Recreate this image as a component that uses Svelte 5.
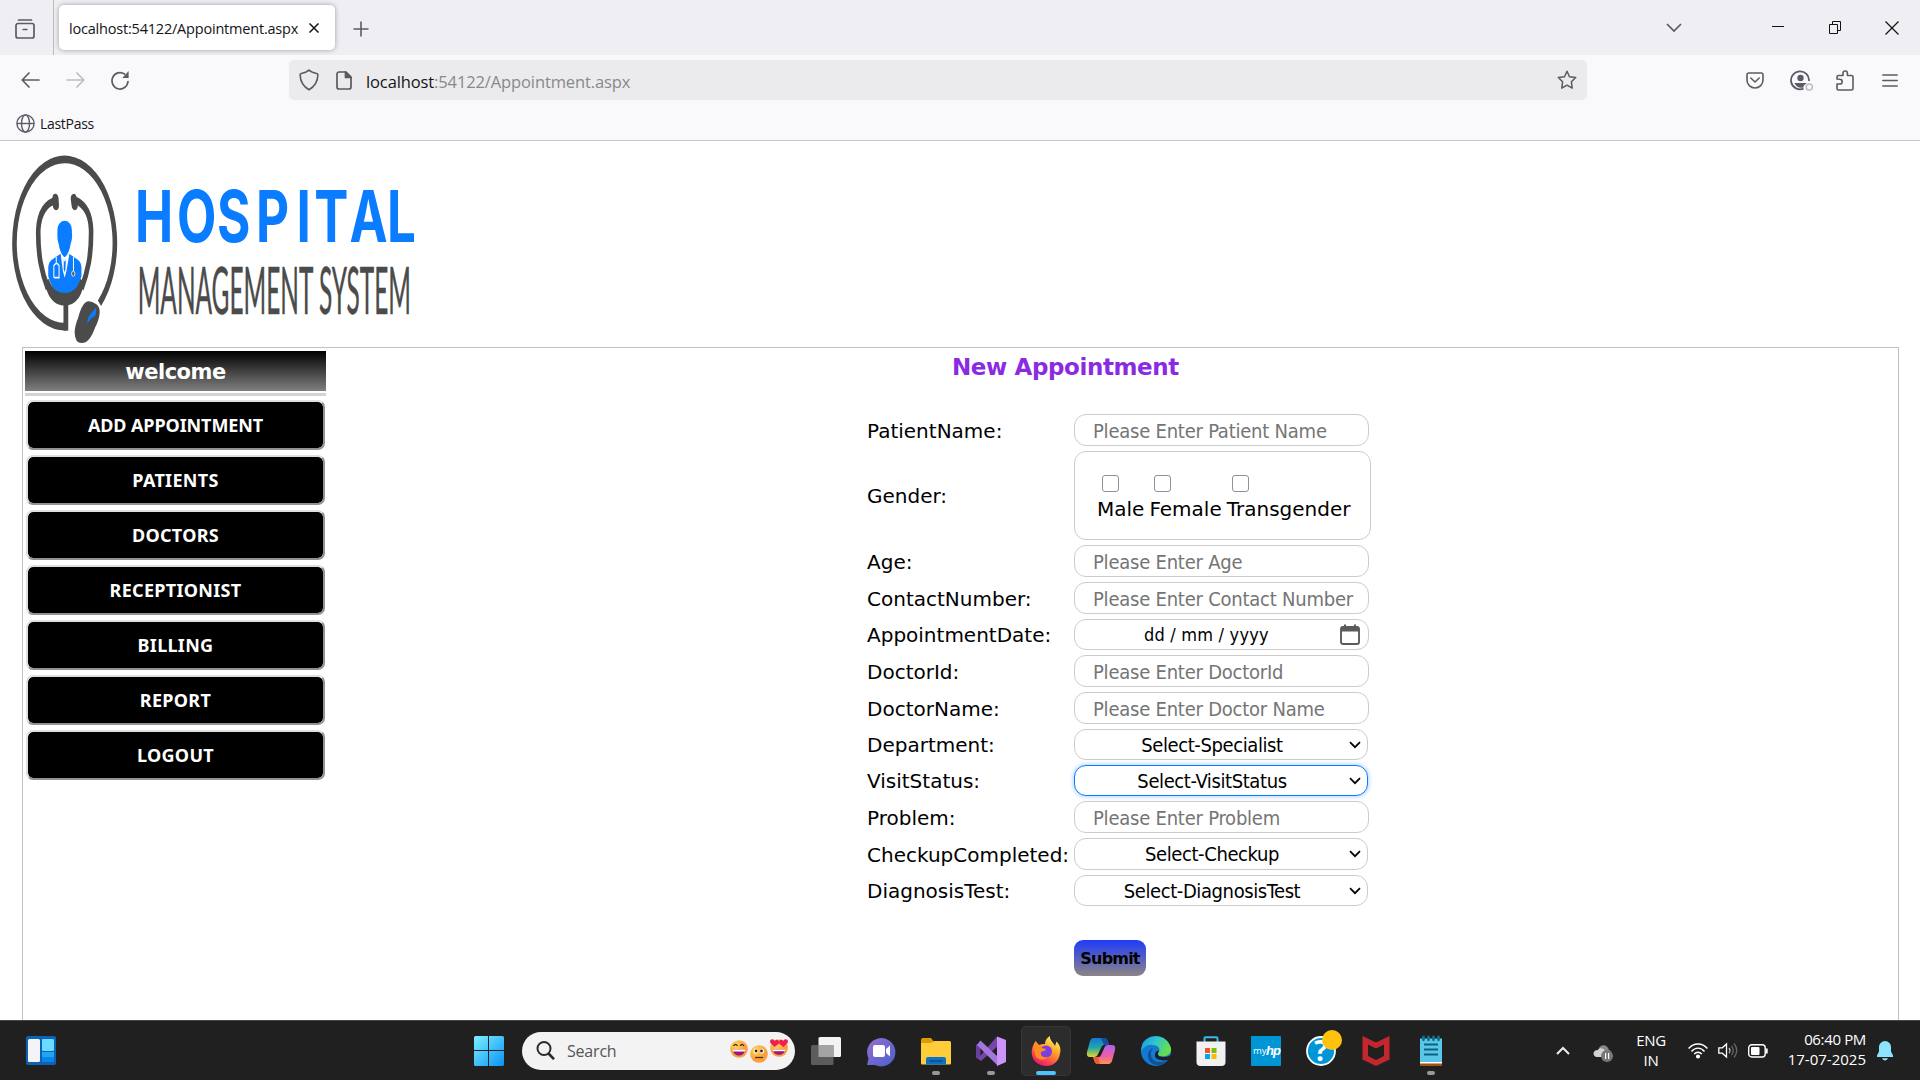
<script>
  const menu = ['ADD APPOINTMENT', 'PATIENTS', 'DOCTORS', 'RECEPTIONIST', 'BILLING', 'REPORT', 'LOGOUT'];
  const genders = ['Male', 'Female', 'Transgender'];
  const fields = [
    { label: 'PatientName:', kind: 'text', value: 'Please Enter Patient Name' },
    { label: 'Gender:', kind: 'gender' },
    { label: 'Age:', kind: 'text', value: 'Please Enter Age' },
    { label: 'ContactNumber:', kind: 'text', value: 'Please Enter Contact Number' },
    { label: 'AppointmentDate:', kind: 'date' },
    { label: 'DoctorId:', kind: 'text', value: 'Please Enter DoctorId' },
    { label: 'DoctorName:', kind: 'text', value: 'Please Enter Doctor Name' },
    { label: 'Department:', kind: 'select', value: 'Select-Specialist' },
    { label: 'VisitStatus:', kind: 'select', value: 'Select-VisitStatus', focused: true },
    { label: 'Problem:', kind: 'text', value: 'Please Enter Problem' },
    { label: 'CheckupCompleted:', kind: 'select', value: 'Select-Checkup', tall: true },
    { label: 'DiagnosisTest:', kind: 'select', value: 'Select-DiagnosisTest' }
  ];
</script>

<div class="screen">
  <header class="tabs">
    <div class="view">
      <svg width="20" height="20" viewBox="0 0 20 20" fill="none" stroke="#5b5b66" stroke-width="1.7" stroke-linecap="round"><path d="M3.500 1h13M3 4.500h14a2 2 0 0 1 2 2V17a2 2 0 0 1-2 2H3a2 2 0 0 1-2-2V6.500a2 2 0 0 1 2-2zM8.200 10.500h3.600" /></svg>
    </div>
    <div class="tab">
      <span>localhost:54122/Appointment.aspx</span>
      <svg width="10" height="10" viewBox="0 0 10 10" stroke="#15141a" stroke-width="1.500"><path d="M.5.5l9 9M9.500.5l-9 9" /></svg>
    </div>
    <svg class="plus" width="16" height="16" viewBox="0 0 16 16" stroke="#5b5b66" stroke-width="1.600"><path d="M8 .5v15M.5 8h15" /></svg>
    <div class="window">
      <svg class="down" width="16" height="10" viewBox="0 0 16 10" fill="none" stroke="#5b5b66" stroke-width="1.700"><path d="M1 1l7 7 7-7" /></svg>
      <svg class="mini" width="12" height="13" viewBox="0 0 12 13" stroke="#111"><path d="M0 5.500h12" /></svg>
      <svg class="restore" width="13" height="14" viewBox="0 0 13 14" fill="none" stroke="#111"><path d="M.5 3.500h8v9h-8zM3.500 3.500v-3h8v9h-3" /></svg>
      <svg class="shut" width="14" height="14" viewBox="0 0 14 14" stroke="#111" stroke-width="1.200"><path d="M.5.5l13 13M13.500.5l-13 13" /></svg>
    </div>
  </header>

  <div class="toolbar">
    <svg class="back" width="19" height="16" viewBox="0 0 19 16" fill="none" stroke="#5b5b66" stroke-width="1.700" stroke-linecap="round" stroke-linejoin="round"><path d="M18 8H1.500M8 1L1.200 8 8 15" /></svg>
    <svg class="forward" width="19" height="16" viewBox="0 0 19 16" fill="none" stroke="#bdbdc2" stroke-width="1.700" stroke-linecap="round" stroke-linejoin="round"><path d="M1 8h16.500M11 1l6.800 7-6.800 7" /></svg>
    <svg class="reload" width="20" height="20" viewBox="0 0 20 20"><path d="M18 11.500A8 8.200 0 1 1 14.500 4" fill="none" stroke="#5b5b66" stroke-width="1.700" stroke-linecap="round" /><path d="M18.600 1v7h-6.300z" fill="#5b5b66" /></svg>
    <div class="url">
      <svg width="20" height="22" viewBox="0 0 20 22" fill="none" stroke="#5b5b5f" stroke-width="1.600" stroke-linejoin="round"><path d="M10 1.200c2 1.800 4.700 2.800 7.700 3.300.8.200 1.200.6 1.200 1.300-.2 7-2.700 11.500-8.900 15-6.200-3.500-8.700-8-8.900-15 0-.7.400-1.100 1.200-1.300 3-.5 5.700-1.500 7.700-3.300z" /></svg>
      <svg class="doc" width="16" height="19" viewBox="0 0 16 19" fill="none" stroke="#5b5b5f" stroke-width="1.700" stroke-linejoin="round"><path d="M3 1h7l5 5v10a2 2 0 0 1-2 2H3a2 2 0 0 1-2-2V3a2 2 0 0 1 2-2z" /><path d="M9.500 1v5.500H15z" fill="#5b5b5f" /></svg>
      <span><b>localhost</b>:54122/Appointment.aspx</span>
      <svg class="star" width="20" height="20" viewBox="0 0 20 20" fill="none" stroke="#5b5b5f" stroke-width="1.500" stroke-linejoin="round"><path d="M10 1.200l2.500 5.500 6.200.8-4.300 4.300.8 6.400-5.200-3-5.200 3 .8-6.400L1.300 7.500l6.200-.8z" /></svg>
    </div>
    <div class="tools">
      <svg width="18" height="17" viewBox="0 0 18 17" fill="none" stroke="#5b5b66" stroke-width="1.600" stroke-linecap="round" stroke-linejoin="round"><path d="M2.500 1h13A1.600 1.600 0 0 1 17 2.600V8c0 4.500-3.500 8-8 8S1 12.500 1 8V2.600A1.600 1.600 0 0 1 2.500 1zM4.800 6L9 10l4.200-4" /></svg>
      <svg class="acct" width="24" height="21" viewBox="0 0 24 21"><path d="M19 11a9 9 0 1 0-5.500 7.600" fill="none" stroke="#5b5b66" stroke-width="1.800" /><circle cx="10.500" cy="8" r="3.200" fill="#5b5b66" /><path d="M4.500 13h12l-3 3v1.500c-4 1.200-7.500-.8-9-4.500z" fill="#5b5b66" /><circle cx="19.300" cy="17" r="3.100" fill="#f9f9fb" stroke="#bdbdc2" stroke-width="1.500" /></svg>
      <svg class="puzzle" width="18" height="21" viewBox="0 0 18 21" fill="none" stroke="#5b5b66" stroke-width="1.600" stroke-linejoin="round"><path d="M1 9V7a1.500 1.500 0 0 1 1.500-1.500H7V3.200a2.200 2.200 0 0 1 4.400 0v2.300h4A1.500 1.500 0 0 1 17 7v11.500a1.500 1.500 0 0 1-1.500 1.500h-13A1.500 1.500 0 0 1 1 18.500V14h2.800a2.300 2.300 0 0 0 0-4.700z" /></svg>
      <svg class="burger" width="16" height="13" viewBox="0 0 16 13" stroke="#5b5b66" stroke-width="1.500" stroke-linecap="round"><path d="M.8 1h14.400M.8 6.500h14.400M.8 12h14.400" /></svg>
    </div>
  </div>

  <div class="bookmarks">
    <svg width="19" height="19" viewBox="0 0 19 19" fill="none" stroke="#5b5b66" stroke-width="1.400"><circle cx="9.500" cy="9.500" r="8.600" /><ellipse cx="9.500" cy="9.500" rx="4" ry="8.600" /><path d="M1 9.500h17" /></svg>
    <span>LastPass</span>
  </div>

  <main>
    <svg class="logo" width="430" height="206" viewBox="0 3 1290 618" role="img" aria-label="Hospital Management System">
      <g transform="translate(194 305) scale(.6 1)" fill="none" stroke="#4b4b4b">
        <path d="M6 255A251 251 0 1 1 174 185" stroke-width="23" />
        <path d="M6 180V267" stroke-width="24" />
        <g stroke="none" fill="#0a7cff">
          <path d="M-20 36L-64 54Q-82 62-82 80V104C-60 150-30 160 0 160S60 150 84 104V80Q84 62 66 54L22 36L0 60z" />
          <path d="M-20 36L-9 88L0 108L9 88L24 36L6 46L4 82L0 92L-5 82L-4 46z" fill="#fff" />
          <path d="M-36-28C-42-74 42-74 36-28C40-14 34 0 30 6C26 24 12 44 0 46C-12 44-26 24-30 6C-34 0-38-14-36-28z" />
        </g>
        <path d="M-42 46V66M-54 108V72Q-40 58-28 72V108H-52M44 46V88" stroke="#fff" stroke-width="5" />
        <circle cx="43" cy="96" r="8" fill="#555" stroke="#fff" stroke-width="3" />
        <path d="M-45-122C-92-118-128-86-132-35C-134 40-116 90-84 140M84 140C116 90 134 40 132-35C130-80 104-110 56-124" stroke-width="23" />
        <path d="M-98 118C-90 170-45 192 0 192S90 170 95 118L78 112C60 146 30 154 0 154S-60 146-80 112z" fill="#4b4b4b" stroke="none" />
        <path d="M-46-128l2 18M46-128l4 18" stroke-width="31" stroke-linecap="round" />
      </g>
      <path d="M258 486q12-6 30 6q12 8 11 26q-1 20-14 45q-16 46-40 46q-20 0-21-30q0-20 10-44q10-40 24-49z" fill="#4b4b4b" />
      <path d="M289 502l-2 24-14 10-12 16 4-20 10-14z" fill="#0a7cff" />
      <g transform="scale(.72 1)">
        <text class="hospital" y="305" x="563 738 904 1067 1235 1309 1456 1612">HOSPITAL</text>
      </g>
      <text class="system" x="413" y="523" textLength="820" lengthAdjust="spacingAndGlyphs">MANAGEMENT SYSTEM</text>
    </svg>

    <section class="panel">
      <nav>
        <h2>welcome</h2>
        <i></i>
        <div class="buttons">
          {#each menu as item}<button>{item}</button>{/each}
        </div>
      </nav>

      <div class="form">
        <h1>New Appointment</h1>
        {#each fields as f}
          <div class="row {f.kind}" class:tall={f.tall}>
            <span class="label">{f.label}</span>
            {#if f.kind === 'text'}
              <input placeholder={f.value} />
            {:else if f.kind === 'select'}
              <div class="box drop" class:focused={f.focused}>
                <span>{f.value}</span>
                <svg width="12" height="8" viewBox="0 0 12 8" fill="none" stroke="#000" stroke-width="1.700"><path d="M1 1.200l5 5 5-5" /></svg>
              </div>
            {:else if f.kind === 'date'}
              <div class="box day">
                <span>dd / mm / yyyy</span>
                <svg width="20" height="21" viewBox="0 0 20 21"><path d="M1 5a2 2 0 0 1 2-2h14a2 2 0 0 1 2 2v13a2 2 0 0 1-2 2H3a2 2 0 0 1-2-2z" fill="none" stroke="#5b5b5b" stroke-width="1.900" /><path d="M1 3h18v4.500H1zM4 .5h2v3H4zM14 .5h2v3h-2z" fill="#5b5b5b" /></svg>
              </div>
            {:else}
              <div class="box genders">
                {#each genders as g}
                  <label><i></i><span>{g}</span></label>
                {/each}
              </div>
            {/if}
          </div>
        {/each}
        <button class="submit">Submit</button>
      </div>
    </section>
  </main>

  <footer>
    <svg class="widgets" width="30" height="29" viewBox="0 0 30 29"><rect width="30" height="29" rx="2" fill="#0c63b4" /><rect x="2" y="3" width="12" height="23" rx="1.500" fill="#f4f4f8" /><rect x="16" y="3" width="12" height="12" rx="1" fill="#6bdcff" /><path d="M16 16h12v5H16z" fill="#22a5f5" /><path d="M16 21h12v5H16z" fill="#0a84e8" /></svg>

    <svg class="start" width="30" height="30" viewBox="0 0 30 30">
      <defs><linearGradient id="win" x1="0" y1="0" x2="1" y2="1"><stop offset="0" stop-color="#7df0ff" /><stop offset="1" stop-color="#0a92f5" /></linearGradient></defs>
      <path d="M0 1.500Q0 0 1.500 0H14v14H0zM15 0h13.500Q30 0 30 1.500V14H15zM0 15h14v15H1.500Q0 30 0 28.500zM15 15h15v13.500q0 1.500-1.500 1.500H15z" fill="url(#win)" />
    </svg>

    <div class="search">
      <svg width="19" height="19" viewBox="0 0 19 19" fill="none" stroke="#2b2b30" stroke-width="2"><circle cx="8" cy="7.500" r="6.500" /><path d="M12.500 12.500l5.500 5.700" stroke-width="2.600" /></svg>
      <span>Search</span>
      <svg width="60" height="26" viewBox="0 0 60 26">
        <defs><radialGradient id="face" cx=".35" cy=".3"><stop offset="0" stop-color="#ffdb55" /><stop offset="1" stop-color="#f9a03c" /></radialGradient></defs>
        <circle cx="10" cy="11" r="8.800" fill="url(#face)" /><path d="M4 11.500h12c0 8-12 8-12 0z" fill="#a3157e" /><path d="M4 11.500h12v2H4z" fill="#fff" /><path d="M4.500 8q2-3 4 0M11 8q2-3 4 0" fill="none" stroke="#5a2d18" stroke-width="1.300" />
        <circle cx="30" cy="16" r="8.800" fill="url(#face)" /><ellipse cx="26.500" cy="13" rx="2" ry="2.600" fill="#fff" /><ellipse cx="33" cy="13" rx="2" ry="2.600" fill="#fff" /><circle cx="27" cy="13" r="1.400" fill="#3b2420" /><circle cx="32.500" cy="13" r="1.400" fill="#3b2420" /><path d="M26 19.500h8" stroke="#5a2d18" stroke-width="1.300" />
        <circle cx="50" cy="10" r="8.800" fill="url(#face)" /><path d="M44 11.500h12c0 7-12 7-12 0z" fill="#a3157e" /><path d="M44 11.500h12v1.700H44z" fill="#fff" /><path d="M45.500 9l-4-4c-2-4 3-5 4.300-2 2-3 6 0 3.700 3zM54.500 9l4-4c2-4-3-5-4.300-2-2-3-6 0-3.700 3z" fill="#f01e50" />
      </svg>
    </div>

    <div class="apps">
      <div><svg viewBox="0 0 30 30"><rect x="7.500" y="1" width="22.500" height="20" rx="1.500" fill="#f3f3f3" /><rect y="9" width="22.500" height="20" rx="1.500" fill="#5c5c5c" /><path d="M7.500 9h15v12h-15z" fill="#a4a4a4" /></svg></div>
      <div><svg viewBox="0 0 30 30"><defs><linearGradient id="chat" x1="0" y1="0" x2="1" y2="1"><stop offset="0" stop-color="#9a6fd0" /><stop offset=".5" stop-color="#6f66d0" /><stop offset="1" stop-color="#4a63c8" /></linearGradient></defs><path d="M1 29l1.500-6.500A14.200 14.200 0 1 1 9 29z" fill="url(#chat)" /><rect x="7" y="9" width="12" height="12" rx="2" fill="#fff" /><path d="M20 13l4-3.500v11L20 17z" fill="#fff" /></svg></div>
      <div class="open"><svg viewBox="0 0 30 30"><path d="M0 4q0-2 2-2h8l3 4h8v5H0z" fill="#dd9b04" /><path d="M0 7h10l3-2h15.500Q30 5 30 6.500v21q0 1-1 1H1q-1 0-1-1z" fill="#ffcc3a" /><path d="M5 28.500V23q0-2 2-2h16q2 0 2 2v5.500z" fill="#0b72c4" /><path d="M8.500 25h13" stroke="#0a4d91" stroke-width="1.500" /></svg></div>
      <div class="open"><svg viewBox="0 0 30 30"><path d="M0 9l4.500-3.500v19.300L0 21.500z" fill="#6a3f9c" /><path d="M2 22.500L21 .5l1 9.500L5 25z" fill="#7446a8" /><path d="M4.500 4.500L22 21v9L1 9z" fill="#a577dc" /><path d="M21 .5L30 4v22l-9 4z" fill="#cc94f8" /></svg></div>
      <div class="open active"><svg viewBox="0 0 30 30"><defs><linearGradient id="fox" x1=".9" y1="0" x2=".35" y2="1"><stop offset=".15" stop-color="#ffe94a" /><stop offset=".55" stop-color="#ff8a2a" /><stop offset="1" stop-color="#f0146e" /></linearGradient></defs><path d="M4.500 5l3.500 4c2-1 4-1 6-1 0-4 2-6 5-8-.5 4 3 6 5 10l1.500-4.500c4 4 4.500 8 3.500 12-1 8-7 12.500-14 12.500S1 25 .7 17C.5 13 2 9 4.500 5z" fill="url(#fox)" /><circle cx="15" cy="15.500" r="6" fill="#7a3fe0" /><path d="M2 11c4-2 7-2 9 1l4 1c-1 3-4 2-5 3-1 4 2 6 7 5-6 6-14 1-13-5z" fill="#ff8b22" /></svg></div>
      <div><svg viewBox="0 0 30 30"><defs><linearGradient id="cpa" x1="0" y1="0" x2="0" y2="1"><stop offset="0" stop-color="#1676d8" /><stop offset=".5" stop-color="#1fa7a5" /><stop offset="1" stop-color="#e6d52b" /></linearGradient><linearGradient id="cpb" x1="0" y1="0" x2="0" y2="1"><stop offset="0" stop-color="#ad62ed" /><stop offset=".6" stop-color="#ee60a0" /><stop offset="1" stop-color="#ff944e" /></linearGradient></defs><path d="M7 2h11q3 0 4 4l1 3h-4q-3 0-4 3l-3 6q-1 3-4 3H4q-4 0-3-5L4 5q1-3 3-3z" fill="url(#cpa)" /><path d="M23 28H12q-3 0-4-4l-1-3h4q3 0 4-3l3-6q1-3 4-3h4q4 0 3 5l-3 11q-1 3-3 3z" fill="url(#cpb)" /><path d="M15 2h3q3 0 4 4l1 3h-5z" fill="#184ba5" /><path d="M7 21h5l2 7h-2q-3 0-4-4z" fill="#f0592c" /><path d="M17 9l-5 12h1q2-1 3-4l3-7z" fill="#202020" /></svg></div>
      <div><svg viewBox="0 0 30 30"><defs><linearGradient id="eg" x1="0" y1="0" x2="1" y2=".4"><stop offset="0" stop-color="#1795df" /><stop offset=".5" stop-color="#30c5cf" /><stop offset="1" stop-color="#67df4c" /></linearGradient></defs><circle cx="15" cy="15" r="15" fill="#127bd1" /><path d="M1 9C5-2 25-4 30 12c1 6-4 9-10 8-3 0-4-2-2-4 2-4-2-7-6-7C7 8 3 10 0 16z" fill="url(#eg)" /><path d="M12 12c-5 6-1 15 8 14 3 0 5-1 7-2-7 9-20 5-20-4 0-4 2-7 5-8z" fill="#124f97" /><path d="M18 15c-2 3-1 6 4 6 2 0 5 0 8-2l0 4c-7 3-17 1-16-4 0-3 2-5 4-4z" fill="#202020" /></svg></div>
      <div><svg viewBox="0 0 30 30"><path d="M8.500 8V2.300q0-1 1-1h11q1 0 1 1V8" fill="none" stroke="#38b8ee" stroke-width="2" /><path d="M.5 5.500h29V26q0 4-4 4h-21q-4 0-4-4z" fill="#f1f1f1" /><path d="M9 12h5v5H9z" fill="#f35325" /><path d="M15.500 12h5v5h-5z" fill="#81bc06" /><path d="M9 18h5v5H9z" fill="#05a6f0" /><path d="M15.500 18h5v5h-5z" fill="#ffba08" /></svg></div>
      <div><svg viewBox="0 0 30 30"><rect width="30" height="30" rx="1" fill="#0096d6" /><text class="my" x="2" y="18">my</text><text class="hp" x="15" y="19">hp</text></svg></div>
      <div><svg viewBox="0 0 30 30"><circle cx="15" cy="15" r="14" fill="#0096d6" stroke="#fff" stroke-width="1.800" /><text class="help" x="15" y="25">?</text><circle cx="26" cy="4" r="10" fill="#ffc20e" /></svg></div>
      <div><svg viewBox="0 0 30 30"><path d="M1.500 0L15 6.500 28.500 0v23.500L15 30 1.500 23.500zM7 8.500V20l8 4 8-4V8.500l-8 4z" fill="#c4262e" fill-rule="evenodd" /></svg></div>
      <div class="open"><svg viewBox="0 0 30 30"><path d="M4 27h22v3H4z" fill="#a8500f" /><path d="M4 26h22v1.500H4z" fill="#fff" /><path d="M4 2.500h22V26H4z" fill="#5bc7e8" /><path d="M8 8.500h14M8 13.500h14M8 18.500h14" stroke="#0b627d" stroke-width="1.900" /><path d="M7.500.8v3M12.500.8v3M17.500.8v3M22.500.8v3" stroke="#10708f" stroke-width="2.800" stroke-linecap="round" /></svg></div>
    </div>

    <div class="tray">
      <svg class="up" width="14" height="9" viewBox="0 0 14 9" fill="none" stroke="#eee" stroke-width="2"><path d="M1 8l6-6 6 6" /></svg>
      <svg class="cloud" width="20" height="18" viewBox="0 0 20 18"><path d="M5 7c1-7 9-8 11-1 2 0 2 3 2 5H4z" fill="#888" /><path d="M3 13c-4-2-3-7 2-7 2-3 6-2 7 1l1 6z" fill="#d2d2d2" /><circle cx="14" cy="12" r="6" fill="#777" /><path d="M12.600 9v6M15.600 9v6" stroke="#fff" stroke-width="1.200" /></svg>
      <div class="lang">ENG<br />IN</div>
      <svg class="wifi" width="20" height="16" viewBox="0 0 20 16" fill="none" stroke="#fff" stroke-width="1.400"><path d="M.6 5.500c5-6 13.800-6 18.800 0M3.500 8.500c3.600-4.500 9.400-4.500 13 0M6.200 11.200c2-2.700 5.600-2.700 7.600 0" /><circle cx="10" cy="13.500" r="1.400" fill="#fff" /></svg>
      <svg class="sound" width="20" height="17" viewBox="0 0 20 17" fill="none" stroke-width="1.300"><path d="M.8 5.800h3.500L8.500 2v13L4.300 11.200H.8z" stroke="#fff" /><path d="M11 6q2 2.500 0 5" stroke="#bbb" /><path d="M13.500 3.800q3.500 4.700 0 9.400M16 1.500q5.500 7 0 14" stroke="#666" /></svg>
      <svg class="battery" width="20" height="14" viewBox="0 0 20 14"><rect x=".7" y=".8" width="16.500" height="12.200" rx="3" fill="none" stroke="#fff" stroke-width="1.400" /><rect x="3" y="3" width="8.500" height="8" rx="1" fill="#fff" /><path d="M18.700 4.500v5" stroke="#fff" stroke-width="2" /></svg>
      <div class="clock">06:40 PM<br /><span>17-07-2025</span></div>
      <svg class="bell" width="16" height="20" viewBox="0 0 16 20" fill="#8be3fc"><path d="M8 0a6 6 0 0 1 6 6.500v4l2 4V16H0v-1.500l2-4v-4A6 6 0 0 1 8 0zM5 17.200h6q-1 2.300-3 2.300t-3-2.300z" /></svg>
    </div>
  </footer>
</div>

<style>
  :global(body) { margin: 0; overflow: hidden; background: #fff; }
  .screen { width: 1920px; height: 1080px; display: flex; flex-direction: column; overflow: hidden; font-family: 'Open Sans', 'Noto Sans', sans-serif; color: #15141a; }
  svg { display: block; flex: none; }
  button { font: inherit; padding: 0; margin: 0; }

  .tabs { height: 55px; flex: none; background: #efeef3; display: flex; align-items: flex-start; box-sizing: border-box; }
  .view { width: 54px; height: 55px; border-right: 1px solid #bbbac2; padding: 19px 0 0 15px; box-sizing: border-box; }
  .tab { margin: 5px 0 0 5px; width: 276px; height: 45px; box-sizing: border-box; padding: 0 16px 0 10px; background: #fff; border-radius: 5px; box-shadow: 0 0 5px rgba(0, 0, 0, .35); display: flex; align-items: center; justify-content: space-between; font-size: 14.500px; letter-spacing: -.2px; white-space: nowrap; }
  .tab span { margin-top: 2px; }
  .plus { margin: 21px 0 0 18px; }
  .window { margin-left: auto; display: flex; padding-right: 21px; }
  .down { margin: 23px 90px 0 0; }
  .mini { margin: 21px 45px 0 0; }
  .restore { margin: 21px 43px 0 0; }
  .shut { margin-top: 21px; }

  .toolbar { height: 50px; flex: none; background: #f9f9fb; display: flex; align-items: center; box-sizing: border-box; padding-left: 21px; }
  .forward { margin-left: 26px; }
  .reload { margin-left: 25px; }
  .url { margin: 0 0 0 159px; width: 1298px; height: 40px; box-sizing: border-box; border-radius: 5px; background: #ebebed; display: flex; align-items: center; padding: 0 10px; font-size: 16.500px; letter-spacing: -.12px; color: #88888c; white-space: nowrap; }
  .url span { margin-top: 2px; }
  .url b { font-weight: 400; color: #15141a; }
  .doc { margin: 0 14px 0 17px; }
  .star { margin-left: auto; }
  .tools { display: flex; align-items: center; margin-left: 159px; }
  .acct { margin-left: 26px; }
  .puzzle { margin-left: 22px; }
  .burger { margin-left: 28px; }

  .bookmarks { height: 36px; flex: none; background: #f9f9fb; border-bottom: 1px solid #c8c8ca; box-sizing: border-box; display: flex; align-items: center; gap: 5px; padding: 2px 0 0 16px; font-size: 14px; letter-spacing: -.3px; }

  main { flex: 1; min-height: 0; overflow: hidden; display: flex; flex-direction: column; }
  .logo { overflow: visible; }
  .hospital { font-family: Inter, sans-serif; font-weight: 700; font-size: 213px; fill: #0a7cff; }
  .system { font-family: Lato, sans-serif; font-weight: 400; font-size: 199px; fill: #4b4b4b; stroke: #4b4b4b; stroke-width: 1.500px; }

  .panel { flex: none; width: 1877px; height: 700px; margin-left: 22px; border: 1px solid #c0c0c0; box-sizing: border-box; display: flex; align-items: flex-start; font-family: 'DejaVu Sans', sans-serif; color: #000; }
  nav { width: 301px; margin: 3px 0 0 2px; }
  nav h2 { margin: 0; height: 40px; line-height: 43px; background: linear-gradient(#000, #808080); color: #fff; text-align: center; font-size: 21px; font-weight: 700; letter-spacing: -.5px; }
  nav i { display: block; height: 3px; margin: 2px 0 4px; background: #d3d3d3; }
  .buttons { display: flex; flex-direction: column; gap: 5px; padding: 0 1px; }
  .buttons button { height: 50px; border: 2px solid; border-color: #dfdfdf #929292 #929292 #dfdfdf; border-radius: 7px; background: #000; background-clip: padding-box; color: #fff; font-family: 'Noto Sans', sans-serif; font-size: 18px; font-weight: 700; letter-spacing: .3px; }
  .buttons button:first-child { letter-spacing: -.1px; }

  .form { width: 510px; margin-left: 541px; display: flex; flex-direction: column; gap: 5px; }
  .form h1 { margin: 0 0 25px 85px; height: 36px; line-height: 38px; color: #8a2be2; font-size: 23px; font-weight: 700; letter-spacing: -.4px; white-space: nowrap; }
  .row { display: grid; grid-template-columns: 207px 297px; height: 32px; align-items: center; font-size: 20px; }
  .row.gender { height: 89px; }
  .row.select, .row.date { height: 31px; }
  .row.tall { height: 32px; }
  .label { white-space: nowrap; padding-top: 1px; }
  input, .box { box-sizing: border-box; height: 100%; border: 1px solid #ccc; border-radius: 12px; background: #fff; font-family: 'DejaVu Sans Condensed', 'DejaVu Sans', sans-serif; font-stretch: condensed; font-size: 20px; }
  input { width: 295px; padding: 1px 0 0 18px; outline: none; letter-spacing: -.23px; }
  input::placeholder { color: #757575; opacity: 1; }
  .drop, .day { display: flex; align-items: center; }
  .drop { width: 294px; padding-right: 6px; letter-spacing: -.4px; }
  .drop span { flex: 1; text-align: center; white-space: nowrap; }
  .focused { border-color: #0a7cff; box-shadow: 0 0 5px rgba(0, 123, 255, .45); }
  .day { width: 295px; padding: 0 8px 0 69px; justify-content: space-between; white-space: nowrap; font-size: 18px; letter-spacing: .2px; }
  .genders { display: flex; gap: 5px; padding: 23px 0 0 22px; font-family: 'DejaVu Sans', sans-serif; font-stretch: normal; font-size: 20px; }
  .genders label { display: flex; flex-direction: column; }
  .genders i { width: 15px; height: 15px; margin-left: 5px; border: 1px solid #8f8f9d; border-radius: 3px; }
  .genders span { line-height: 24px; margin-top: 5px; }
  .submit { margin: 29px 0 0 207px; width: 72px; height: 36px; border: 0; border-radius: 9px; background: linear-gradient(#1f3bfa, #8c8484); font-weight: 700; font-size: 16px; line-height: 38px; letter-spacing: -.8px; color: #000; }

  footer { height: 60px; flex: none; box-sizing: border-box; background: #202020; border-top: 1px solid #444847; display: flex; align-items: center; }
  .widgets { margin: 0 0 1px 26px; }
  .start { margin-left: 418px; }
  .search { margin-left: 18px; width: 273px; height: 38px; box-sizing: border-box; border-radius: 19px; background: #f3f3f3; display: flex; align-items: center; padding-left: 14px; font-size: 16px; letter-spacing: -.2px; color: #555; }
  .search span { margin: 0 auto 0 12px; }
  .search svg:last-child { margin-right: 6px; }
  .apps { display: flex; margin-left: 6px; height: 50px; }
  .apps div { width: 50px; height: 50px; margin-right: 5px; box-sizing: border-box; display: flex; flex-direction: column; align-items: center; padding-top: 10px; border-radius: 5px; }
  .apps svg { width: 30px; height: 30px; overflow: visible; }
  .apps .open::after { content: ''; margin-top: 5px; width: 8px; height: 4px; border-radius: 2px; background: #999; }
  .apps .active { background: #2c2c2c; box-shadow: inset 0 0 0 1px #353535; }
  .apps .active::after { width: 20px; background: #4cc2ff; }
  .my { font: 9.500px 'Open Sans', sans-serif; fill: #fff; }
  .hp { font: italic 700 13px 'Liberation Sans', sans-serif; fill: #fff; letter-spacing: -1px; }
  .help { font: 700 28px 'Open Sans', sans-serif; fill: #fff; text-anchor: middle; }

  .tray { margin-left: auto; display: flex; align-items: center; padding-right: 27px; color: #fff; font-size: 15px; line-height: 20px; letter-spacing: -.35px; }
  .cloud { margin: 4px 0 0 23px; }
  .lang { width: 32px; margin: 0 0 2px 22px; text-align: center; }
  .wifi { margin-left: 21px; }
  .sound { margin-left: 10px; }
  .battery { margin-left: 10px; }
  .clock { width: 86px; margin: 0 11px 3px 12px; text-align: right; }
  .clock span { letter-spacing: 0; }
</style>
